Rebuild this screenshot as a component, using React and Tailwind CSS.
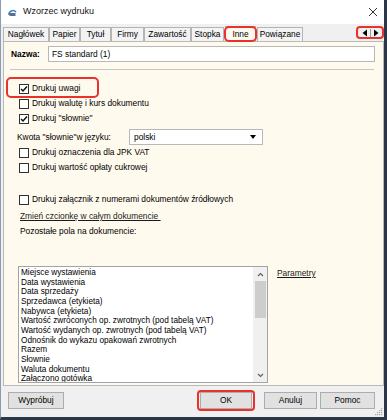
import React from 'react';

const tabs = [
  { label: 'Nagłówek', w: 'w-[46px]' },
  { label: 'Papier', w: 'w-[31px]' },
  { label: 'Tytuł', w: 'w-[31px]' },
  { label: 'Firmy', w: 'w-[33px]' },
  { label: 'Zawartość', w: 'w-[47px]' },
  { label: 'Stopka', w: 'w-[33px]' },
];

const items = [
  'Miejsce wystawienia',
  'Data wystawienia',
  'Data sprzedaży',
  'Sprzedawca (etykieta)',
  'Nabywca (etykieta)',
  'Wartość zwróconych op. zwrotnych (pod tabelą VAT)',
  'Wartość wydanych op. zwrotnych (pod tabelą VAT)',
  'Odnośnik do wykazu opakowań zwrotnych',
  'Razem',
  'Słownie',
  'Waluta dokumentu',
  'Załączono gotówka',
];

const Check = ({ checked }) => (
  <span className="w-[10px] h-[10px] border border-[#333] bg-white flex items-center justify-center shrink-0">
    {checked && (
      <svg width="8" height="8" viewBox="0 0 8 8">
        <path d="M1 4 L3 6 L7 1.5" stroke="#111" strokeWidth="1.5" fill="none" />
      </svg>
    )}
  </span>
);

const CheckRow = ({ label, checked, className = '' }) => (
  <div className={`h-[15px] flex items-center pl-[15px] gap-[3px] ${className}`}>
    <Check checked={checked} />
    <span>{label}</span>
  </div>
);

const Button = ({ label, className = '' }) => (
  <div className={`h-[17px] border border-[#adadad] bg-[#e1e1e1] flex items-center justify-center ${className}`}>
    {label}
  </div>
);

export default function App() {
  return (
    <div className="w-[387px] h-[420px] flex flex-col bg-[#f0f0f0] border-l border-l-[#8a9bb2] border-r-[3px] border-b-[3px] border-r-[#2c3647] border-b-[#2c3647] text-[8.4px] text-black font-['Liberation_Sans',Arial,sans-serif] overflow-hidden">
      {/* title bar */}
      <div className="h-[24px] bg-white flex items-center pl-[7px] pr-[6px] shrink-0">
        <svg width="9" height="9" viewBox="0 0 9 9">
          <path d="M1 7 A4 4 0 0 1 8 4" stroke="#3a7fc0" strokeWidth="1.6" fill="none" />
          <rect x="1.5" y="5" width="6" height="3" fill="#5b6f8a" />
        </svg>
        <span className="ml-[6px] text-[9px] text-[#111]">Wzorzec wydruku</span>
        <svg className="ml-auto" width="10" height="10" viewBox="0 0 10 10">
          <path d="M1 1 L9 9 M9 1 L1 9" stroke="#333" strokeWidth="1" />
        </svg>
      </div>

      {/* tab strip */}
      <div className="h-[17px] flex items-end pl-[2px] shrink-0 relative z-10">
        {tabs.map((t) => (
          <div
            key={t.label}
            className={`${t.w} h-[14px] border border-[#b4b4b4] border-b-0 bg-[#f3f3f3] flex items-center justify-center text-[8.3px]`}
          >
            {t.label}
          </div>
        ))}
        <div className="relative w-[33px] h-[17px] -mb-px flex items-center justify-center">
          <div className="w-[31px] h-[15px] border border-[#b4b4b4] border-b-0 bg-[#fffaee] flex items-center justify-center text-[8.3px]">
            Inne
          </div>
          <span className="absolute inset-x-0 top-[1px] bottom-0 border-2 border-[#e8322b] rounded-[5px]" />
        </div>
        <div className="w-[46px] h-[14px] border border-[#b4b4b4] border-b-0 bg-[#f3f3f3] flex items-center justify-center text-[8.3px]">
          Powiązane
        </div>
        <div className="ml-auto mb-[2px] h-[13px] w-[28px] border-2 border-[#e8322b] rounded-[4px] flex items-center justify-center gap-[1px] bg-[#f0f0f0]">
          <svg width="8" height="8" viewBox="0 0 8 8">
            <path d="M6 0.5 L1.5 4 L6 7.5 Z" fill="#000" />
          </svg>
          <span className="w-px h-[8px] bg-[#999]" />
          <svg width="8" height="8" viewBox="0 0 8 8">
            <path d="M2 0.5 L6.5 4 L2 7.5 Z" fill="#000" />
          </svg>
        </div>
      </div>

      {/* panel */}
      <div className="ml-[2px] w-[381px] h-[345px] border border-[#b9b9b9] bg-[#fffaee] shrink-0 overflow-hidden">
        <div className="pt-[4px] pl-[7px] flex items-center">
          <span className="w-[37px] font-bold text-[8.4px]">Nazwa:</span>
          <div className="w-[327px] h-[16px] border border-[#b8b8b8] bg-white flex items-center pl-[3px]">
            FS standard (1)
          </div>
        </div>
        <div className="mt-[7px] ml-[6px] w-[364px] h-px bg-[#c6c6c6]" />

        <div className="relative mt-[11px]">
          <CheckRow label="Drukuj uwagi" checked />
          <span className="absolute left-[2px] top-[-4px] w-[93px] h-[21px] border-2 border-[#e8322b] rounded-[5px]" />
        </div>
        <CheckRow label="Drukuj walutę i kurs dokumentu" />
        <CheckRow label='Drukuj "słownie"' checked />

        <div className="mt-[3px] h-[16px] pl-[13px] flex items-center">
          <span className="w-[112px]">Kwota "słownie"w języku:</span>
          <div className="w-[134px] h-[16px] border border-[#b8b8b8] bg-white flex items-center pl-[4px] pr-[6px]">
            <span>polski</span>
            <svg className="ml-auto" width="6" height="4" viewBox="0 0 6 4">
              <path d="M0 0 L6 0 L3 4 Z" fill="#000" />
            </svg>
          </div>
        </div>

        <CheckRow label="Drukuj oznaczenia dla JPK VAT" />
        <CheckRow label="Drukuj wartość opłaty cukrowej" />
        <CheckRow label="Drukuj załącznik z numerami dokumentów źródłowych" className="mt-[17px]" />

        <div className="mt-[2px] h-[15px] pl-[16px] flex items-center">
          <span className="underline whitespace-pre text-[#1a1a1a]">Zmień czcionkę w całym dokumencie </span>
        </div>
        <div className="h-[15px] pl-[16px] flex items-center">Pozostałe pola na dokumencie:</div>

        <div className="mt-[27px] flex items-start">
          <div className="ml-[14px] w-[250px] h-[117px] border border-[#a0a4aa] bg-white flex">
            <div className="flex-1 pt-[1px] pl-[2px] text-[8.25px] leading-[9.67px] overflow-hidden">
              {items.map((it) => (
                <div key={it} className="whitespace-nowrap">{it}</div>
              ))}
            </div>
            <div className="w-[14px] bg-[#f0f0f0] flex flex-col items-center">
              <div className="h-[14px] flex items-center justify-center">
                <svg width="7" height="5" viewBox="0 0 7 5">
                  <path d="M1 4 L3.5 1.5 L6 4" stroke="#606060" strokeWidth="1.2" fill="none" />
                </svg>
              </div>
              <div className="w-[11px] h-[37px] bg-[#cdcdcd]" />
              <div className="flex-1" />
              <div className="h-[14px] flex items-center justify-center">
                <svg width="7" height="5" viewBox="0 0 7 5">
                  <path d="M1 1 L3.5 3.5 L6 1" stroke="#606060" strokeWidth="1.2" fill="none" />
                </svg>
              </div>
            </div>
          </div>
          <span className="ml-[9px] mt-[1px] underline text-[#1a1a1a]">Parametry</span>
        </div>
      </div>

      {/* buttons */}
      <div className="flex-1 flex items-start pt-[6px] pl-[7px] pr-[9px] relative">
        <Button label="Wypróbuj" className="w-[56px]" />
        <div className="ml-auto relative">
          <Button label="OK" className="w-[52px]" />
          <span className="absolute -left-[3px] -top-[2px] -right-[3px] -bottom-[2px] border-2 border-[#e8322b] rounded-[4px]" />
        </div>
        <Button label="Anuluj" className="w-[53px] ml-[12px]" />
        <Button label="Pomoc" className="w-[55px] ml-[3px]" />
        <svg className="absolute right-[1px] bottom-[1px]" width="8" height="8" viewBox="0 0 8 8">
          <g fill="#a8a8a8">
            <rect x="6" y="0" width="1.2" height="1.2" />
            <rect x="4" y="2" width="1.2" height="1.2" />
            <rect x="6" y="2" width="1.2" height="1.2" />
            <rect x="2" y="4" width="1.2" height="1.2" />
            <rect x="4" y="4" width="1.2" height="1.2" />
            <rect x="6" y="4" width="1.2" height="1.2" />
            <rect x="0" y="6" width="1.2" height="1.2" />
            <rect x="2" y="6" width="1.2" height="1.2" />
            <rect x="4" y="6" width="1.2" height="1.2" />
            <rect x="6" y="6" width="1.2" height="1.2" />
          </g>
        </svg>
      </div>
    </div>
  );
}
